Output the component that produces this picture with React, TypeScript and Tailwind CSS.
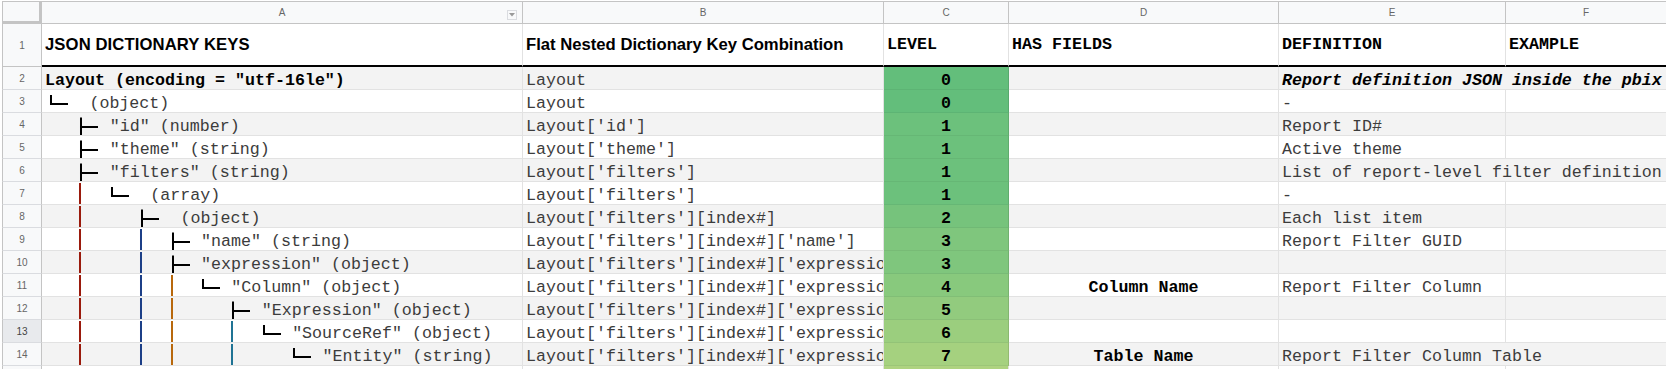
import React from 'react'

type Slot = '' | 'tee' | 'elbow' | 'red' | 'blue' | 'orange' | 'teal'

type Row = {
  slots: Slot[]
  key: string
  bold?: boolean
  path: string
  level: number
  field?: string
  def?: string
  defBold?: boolean
  overflow?: boolean
}

const mono = "[font-family:'Liberation_Mono','Courier_New',monospace]"
const sans = "[font-family:'Liberation_Sans',Arial,sans-serif]"

const pipeColor: Record<string, string> = {
  red: '#9a1a0c',
  blue: '#1c3f87',
  orange: '#b8680c',
  teal: '#1f7394',
}

const levelBg = [
  'bg-[#63be7b]',
  'bg-[#6cc17c]',
  'bg-[#76c37c]',
  'bg-[#7fc67d]',
  'bg-[#88c97d]',
  'bg-[#92cb7e]',
  'bg-[#9bce7e]',
  'bg-[#a5d17f]',
]

const rows: Row[] = [
  { slots: [], key: 'Layout (encoding = "utf-16le")', bold: true, path: 'Layout', level: 0, def: 'Report definition JSON inside the pbix', defBold: true, overflow: true },
  { slots: ['elbow'], key: ' (object)', path: 'Layout', level: 0, def: '-' },
  { slots: ['', 'tee'], key: '"id" (number)', path: "Layout['id']", level: 1, def: 'Report ID#' },
  { slots: ['', 'tee'], key: '"theme" (string)', path: "Layout['theme']", level: 1, def: 'Active theme' },
  { slots: ['', 'tee'], key: '"filters" (string)', path: "Layout['filters']", level: 1, def: 'List of report-level filter definition', overflow: true },
  { slots: ['', 'red', 'elbow'], key: ' (array)', path: "Layout['filters']", level: 1, def: '-' },
  { slots: ['', 'red', '', 'tee'], key: ' (object)', path: "Layout['filters'][index#]", level: 2, def: 'Each list item' },
  { slots: ['', 'red', '', 'blue', 'tee'], key: '"name" (string)', path: "Layout['filters'][index#]['name']", level: 3, def: 'Report Filter GUID' },
  { slots: ['', 'red', '', 'blue', 'tee'], key: '"expression" (object)', path: "Layout['filters'][index#]['expressio", level: 3 },
  { slots: ['', 'red', '', 'blue', 'orange', 'elbow'], key: '"Column" (object)', path: "Layout['filters'][index#]['expressio", level: 4, field: 'Column Name', def: 'Report Filter Column' },
  { slots: ['', 'red', '', 'blue', 'orange', '', 'tee'], key: '"Expression" (object)', path: "Layout['filters'][index#]['expressio", level: 5 },
  { slots: ['', 'red', '', 'blue', 'orange', '', 'teal', 'elbow'], key: '"SourceRef" (object)', path: "Layout['filters'][index#]['expressio", level: 6 },
  { slots: ['', 'red', '', 'blue', 'orange', '', 'teal', '', 'elbow'], key: '"Entity" (string)', path: "Layout['filters'][index#]['expressio", level: 7, field: 'Table Name', def: 'Report Filter Column Table', overflow: true },
]

const TreeSlot = ({ kind }: { kind: Slot }) => {
  if (kind === 'tee' || kind === 'elbow') {
    return (
      <svg width="30.4" height="22" viewBox="0 0 30.4 22" className="shrink-0">
        <rect x="8" y={kind === 'tee' ? 4.5 : 5} width="2" height={kind === 'tee' ? 17.5 : 10} fill="#000" />
        <rect x="8" y="13" width="18" height="2" fill="#000" />
      </svg>
    )
  }
  if (kind) {
    return (
      <svg width="30.4" height="22" viewBox="0 0 30.4 22" className="shrink-0">
        <rect x="7" y="1" width="2" height="21" fill={pipeColor[kind]} />
      </svg>
    )
  }
  return <div className="w-[30.4px] shrink-0" />
}

const ColHeader = () => (
  <div className={`flex h-[23px] border-t border-b border-[#c4c4c4] bg-[#f8f9fa] text-[10px] text-[#666] ${sans}`}>
    <div className="w-[40px] shrink-0 border-l border-r-[3px] border-b-[2px] border-[#c4c4c4] bg-[#f8f9fa]" />
    <div className="relative flex w-[481px] shrink-0 items-center justify-center border-r border-[#c4c4c4]">
      A
      <div className="absolute right-[5px] top-[8px] flex h-[10px] w-[10px] items-center justify-center border border-[#dadce0] bg-[#f8f9fa]">
        <svg width="6" height="4" viewBox="0 0 6 4">
          <path d="M0 0h6L3 3.5z" fill="#999" />
        </svg>
      </div>
    </div>
    <div className="flex w-[361px] shrink-0 items-center justify-center border-r border-[#c4c4c4]">B</div>
    <div className="flex w-[125px] shrink-0 items-center justify-center border-r border-[#c4c4c4]">C</div>
    <div className="flex w-[270px] shrink-0 items-center justify-center border-r border-[#c4c4c4]">D</div>
    <div className="flex w-[227px] shrink-0 items-center justify-center border-r border-[#c4c4c4]">E</div>
    <div className="flex w-[160px] shrink-0 items-center justify-center">F</div>
  </div>
)

const TitleRow = () => (
  <div className="flex h-[43px] bg-white text-[16.67px] font-bold text-black">
    <div className={`flex w-[40px] shrink-0 items-center justify-center border-l border-r border-b border-[#c4c4c4] bg-[#f8f9fa] text-[10px] font-normal text-[#666] ${sans}`}>
      1
    </div>
    <div className={`flex w-[481px] shrink-0 items-center border-r border-r-[#e2e2e2] border-b-2 border-b-black px-[3px] tracking-[0.1px] ${sans}`}>
      JSON DICTIONARY KEYS
    </div>
    <div className={`flex w-[361px] shrink-0 items-center border-r border-r-[#e2e2e2] border-b-2 border-b-black px-[3px] ${sans}`}>
      Flat Nested Dictionary Key Combination
    </div>
    <div className={`flex w-[125px] shrink-0 items-center border-r border-r-[#e2e2e2] border-b-2 border-b-black px-[3px] ${mono}`}>
      LEVEL
    </div>
    <div className={`flex w-[270px] shrink-0 items-center border-r border-r-[#e2e2e2] border-b-2 border-b-black px-[3px] whitespace-pre ${mono}`}>
      HAS FIELDS
    </div>
    <div className={`flex w-[227px] shrink-0 items-center border-r border-r-[#e2e2e2] border-b-2 border-b-black px-[3px] ${mono}`}>
      DEFINITION
    </div>
    <div className={`flex w-[160px] shrink-0 items-center border-b-2 border-b-black px-[3px] ${mono}`}>
      EXAMPLE
    </div>
  </div>
)

const DataRow = ({ r, n }: { r: Row; n: number }) => {
  const bg = n % 2 === 0 ? 'bg-[#f3f3f3]' : 'bg-white'
  return (
    <div className={`flex h-[23px] ${bg} text-[16.67px] ${mono}`}>
      <div
        className={`flex w-[40px] shrink-0 items-center justify-center border-l border-r border-b border-l-[#c4c4c4] border-r-[#c4c4c4] border-b-[#dadce0] text-[10px] ${sans} ${
          n === 13 ? 'bg-[#e8eaed] text-[#444]' : 'bg-[#f8f9fa] text-[#666]'
        }`}
      >
        {n}
      </div>

      <div className="flex w-[481px] shrink-0 overflow-hidden border-r border-b border-[#e2e2e2]">
        {r.slots.length === 0 ? (
          <div className={`self-end whitespace-pre px-[3px] leading-[16px] ${r.bold ? 'font-bold text-black' : 'text-[#3c3c3c]'}`}>
            {r.key}
          </div>
        ) : (
          <>
            {r.slots.map((s, i) => (
              <TreeSlot key={i} kind={s} />
            ))}
            <div className="ml-[7px] self-end whitespace-pre leading-[16px] text-[#3c3c3c]">{r.key}</div>
          </>
        )}
      </div>

      <div className="flex w-[361px] shrink-0 items-end overflow-hidden whitespace-pre border-r border-b border-[#e2e2e2] px-[3px] leading-[16px] text-[#3c3c3c]">
        {r.path}
      </div>

      <div
        className={`flex w-[125px] shrink-0 items-end justify-center border-r border-b border-r-black/10 border-b-black/5 leading-[16px] font-bold text-black ${levelBg[r.level]}`}
      >
        {r.level}
      </div>

      <div className="flex w-[270px] shrink-0 items-end justify-center border-r border-b border-[#e2e2e2] leading-[16px] font-bold text-black">
        {r.field ?? ''}
      </div>

      {r.overflow ? (
        <div
          className={`flex w-[387px] shrink-0 items-end overflow-hidden whitespace-pre border-b border-[#e2e2e2] px-[3px] leading-[16px] ${
            r.defBold ? 'font-bold italic text-black' : 'text-[#3c3c3c]'
          }`}
        >
          {r.def}
        </div>
      ) : (
        <>
          <div className="flex w-[227px] shrink-0 items-end overflow-hidden whitespace-pre border-r border-b border-[#e2e2e2] px-[3px] leading-[16px] text-[#3c3c3c]">
            {r.def ?? ''}
          </div>
          <div className="w-[160px] shrink-0 border-b border-[#e2e2e2]" />
        </>
      )}
    </div>
  )
}

const EmptyRow = ({ n }: { n: number }) => (
  <div className="flex h-[23px] bg-white">
    <div className={`flex w-[40px] shrink-0 items-center justify-center border-l border-r border-[#c4c4c4] bg-[#f8f9fa] text-[10px] text-[#666] ${sans}`}>
      {n}
    </div>
    <div className="w-[481px] shrink-0 border-r border-[#e2e2e2]" />
    <div className="w-[361px] shrink-0 border-r border-[#e2e2e2]" />
    <div className="w-[125px] shrink-0 border-r border-[#e2e2e2] bg-[#aed380]" />
    <div className="w-[270px] shrink-0 border-r border-[#e2e2e2]" />
    <div className="w-[227px] shrink-0 border-r border-[#e2e2e2]" />
    <div className="w-[160px] shrink-0" />
  </div>
)

export default function App() {
  return (
    <div className="h-[369px] w-[1666px] overflow-hidden bg-white pl-[2px] pt-[1px]">
      <ColHeader />
      <TitleRow />
      {rows.map((r, i) => (
        <DataRow key={i} r={r} n={i + 2} />
      ))}
      <EmptyRow n={15} />
    </div>
  )
}
